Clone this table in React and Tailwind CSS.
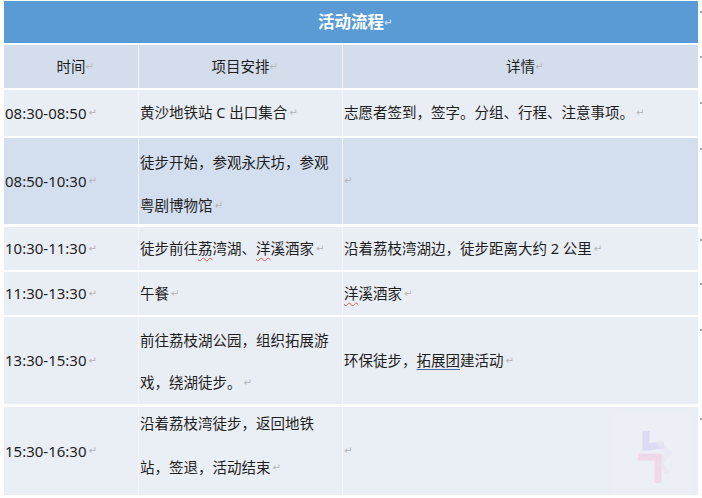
import React from "react";

const Mark = ({ zero = false, cls = "" }) => (
  <span
    className={
      (zero ? "inline-block w-0 " : "ml-[2px] ") +
      "whitespace-nowrap text-[10px] leading-none text-[#b4b4b4] align-[2px] font-['DejaVu_Sans',sans-serif] " +
      cls
    }
  >
    ↵
  </span>
);

const Wavy = ({ children }) => (
  <span className="underline decoration-wavy decoration-[#e05555] decoration-1 underline-offset-[3px]">
    {children}
  </span>
);

const Dot = ({ top }) => (
  <div className={"absolute left-[696px] h-[2px] w-[2px] rounded-full bg-[#8a8a8a] " + top} />
);

function Row({ h, dot, children }) {
  return (
    <div className={"relative flex gap-px bg-[#f3f5f9] " + h}>
      {children}
      <Dot top={dot} />
    </div>
  );
}

const c1 = "w-[134px] shrink-0 flex items-center pl-px";
const c2 = "w-[203px] shrink-0 pl-px";
const c3 = "flex-1 flex items-center pl-px";

export default function App() {
  return (
    <div className="relative h-[498px] w-[702px] overflow-hidden bg-white pl-[4px] pt-px font-['Noto_Sans','Noto_Sans_CJK_SC',sans-serif] text-[14.5px] text-[#1e1e1e]">
      <div className="flex w-[694px] flex-col gap-[2px]">
        {/* title */}
        <div className="relative flex h-[42px] items-center justify-center bg-[#5b9bd5]">
          <span className="text-[16.5px] font-bold text-white">
            活动流程
            <Mark zero cls="text-[#c9dcf0]" />
          </span>
          <Dot top="top-[10px]" />
        </div>
        {/* header */}
        <Row h="h-[43px]" dot="top-[11px]">
          <div className="flex w-[134px] shrink-0 items-center justify-center bg-[#d4ddeb]">
            <span>时间<Mark zero /></span>
          </div>
          <div className="flex w-[203px] shrink-0 items-center justify-center bg-[#d4ddeb]">
            <span>项目安排<Mark zero /></span>
          </div>
          <div className="flex flex-1 items-center justify-center bg-[#d4ddeb]">
            <span>详情<Mark zero /></span>
          </div>
        </Row>
        {/* row 1 */}
        <Row h="h-[46px]" dot="top-[12px]">
          <div className={c1 + " bg-[#e9edf4] text-[15px]"}>
            08:30-08:50<Mark />
          </div>
          <div className={c2 + " flex items-center bg-[#e9edf4]"}>
            黄沙地铁站 C 出口集合<Mark />
          </div>
          <div className={c3 + " bg-[#e9edf4]"}>
            志愿者签到，签字。分组、行程、注意事项。<Mark />
          </div>
        </Row>
        {/* row 2 */}
        <Row h="h-[86px]" dot="top-[10px]">
          <div className={c1 + " bg-[#d3deef] text-[15px]"}>
            08:50-10:30<Mark />
          </div>
          <div className={c2 + " flex flex-col gap-[23px] bg-[#d3deef] pt-[14px] leading-[20px]"}>
            <div>徒步开始，参观永庆坊，参观</div>
            <div>
              粤剧博物馆<Mark />
            </div>
          </div>
          <div className={c3 + " bg-[#d3deef]"}>
            <Mark zero />
          </div>
        </Row>
        {/* row 3 */}
        <Row h="mt-px h-[43px]" dot="top-[12px]">
          <div className={c1 + " bg-[#e9edf4] text-[15px]"}>
            10:30-11:30<Mark />
          </div>
          <div className={c2 + " flex items-center bg-[#e9edf4]"}>
            <span>
              徒步前往<Wavy>荔</Wavy>湾湖、<Wavy>洋</Wavy>溪酒家<Mark />
            </span>
          </div>
          <div className={c3 + " bg-[#e9edf4]"}>
            沿着荔枝湾湖边，徒步距离大约 2 公里<Mark />
          </div>
        </Row>
        {/* row 4 */}
        <Row h="h-[43px]" dot="top-[11px]">
          <div className={c1 + " bg-[#e9edf4] text-[15px]"}>
            11:30-13:30<Mark />
          </div>
          <div className={c2 + " flex items-center bg-[#e9edf4]"}>
            午餐<Mark />
          </div>
          <div className={c3 + " bg-[#e9edf4]"}>
            <span>
              <Wavy>洋</Wavy>溪酒家<Mark />
            </span>
          </div>
        </Row>
        {/* row 5 */}
        <Row h="h-[87px]" dot="top-[12px]">
          <div className={c1 + " bg-[#e9edf4] text-[15px]"}>
            13:30-15:30<Mark />
          </div>
          <div className={c2 + " flex flex-col gap-[22px] bg-[#e9edf4] pt-[13px] leading-[20px]"}>
            <div>前往荔枝湖公园，组织拓展游</div>
            <div>
              戏，绕湖徒步。<Mark />
            </div>
          </div>
          <div className={c3 + " bg-[#e9edf4]"}>
            <span>
              环保徒步，
              <span className="underline decoration-[#4a6a9a] decoration-1 underline-offset-[3px]">拓展团</span>
              建活动<Mark />
            </span>
          </div>
        </Row>
        {/* row 6 */}
        <Row h="mt-px h-[88px]" dot="top-[11px]">
          <div className={c1 + " bg-[#eaeef5] text-[15px]"}>
            15:30-16:30<Mark />
          </div>
          <div className={c2 + " flex flex-col gap-[24px] bg-[#eaeef5] pt-[6px] leading-[20px]"}>
            <div>沿着荔枝湾徒步，返回地铁</div>
            <div>
              站，签退，活动结束<Mark />
            </div>
          </div>
          <div className={c3 + " bg-[#eaeef5]"}>
            <Mark zero />
          </div>
        </Row>
      </div>

      {/* faint watermark logo */}
      <svg
        className="absolute left-[612px] top-[413px]"
        width="80"
        height="80"
        viewBox="0 0 80 80"
      >
        <rect x="0" y="0" width="80" height="80" fill="#eef1f8" opacity="0.5" />
        <path d="M34 18 L34 34 L52 32" stroke="#d4d3f4" strokeWidth="7" fill="none" opacity="0.7" />
        <path d="M46 28 L56 40 L50 48" stroke="#e8e6f2" strokeWidth="6" fill="none" opacity="0.6" />
        <path d="M26 44 L46 44 L46 70" stroke="#f3cde3" strokeWidth="7" fill="none" opacity="0.7" />
        <path d="M48 50 L56 60" stroke="#e6e4ee" strokeWidth="5" fill="none" opacity="0.6" />
      </svg>
    </div>
  );
}
